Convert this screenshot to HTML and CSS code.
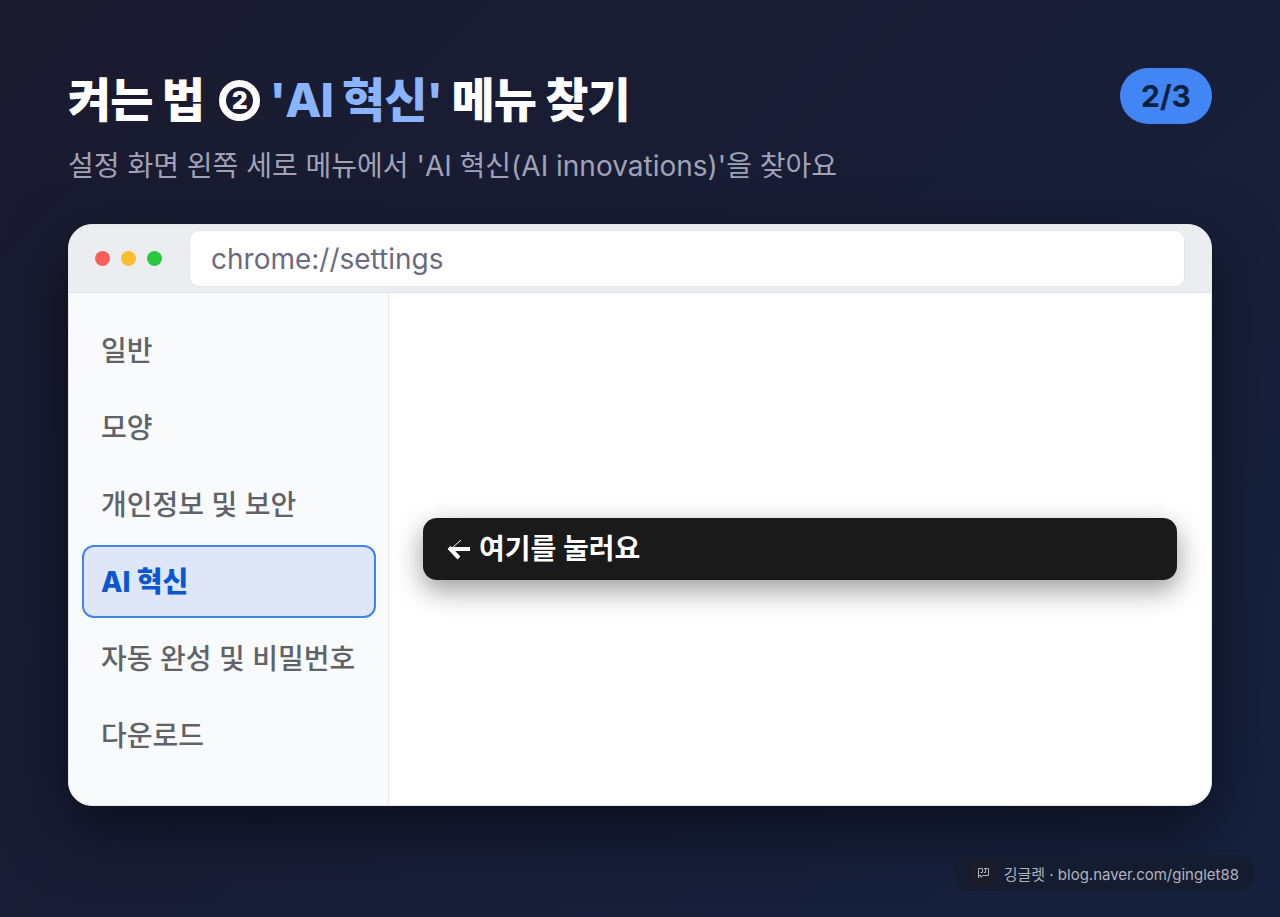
FILE: index.html
```html
<!DOCTYPE html>
<html lang="ko">
<head>
    <meta charset="UTF-8">
    <meta name="viewport" content="width=device-width, initial-scale=1.0">
    <title>켜는 법 ② 'AI 혁신' 메뉴 찾기</title>
    <link rel="stylesheet" href="styles.css">
</head>
<body>
    <div class="slide">
        <header class="header">
            <div>
                <h1>켜는 법 <span class="step">2</span> <span class="highlight">'AI 혁신'</span> 메뉴 찾기</h1>
                <p class="subtitle">설정 화면 왼쪽 세로 메뉴에서 'AI 혁신(AI innovations)'을 찾아요</p>
            </div>
            <span class="page-badge">2/3</span>
        </header>

        <main class="browser">
            <div class="toolbar">
                <div class="dots">
                    <span class="dot red"></span>
                    <span class="dot yellow"></span>
                    <span class="dot green"></span>
                </div>
                <input type="text" class="address" aria-label="주소" value="chrome://settings">
            </div>
            <div class="content">
                <nav class="sidebar">
                    <a href="#">일반</a>
                    <a href="#">모양</a>
                    <a href="#">개인정보 및 보안</a>
                    <a href="#" class="active">AI 혁신</a>
                    <a href="#">자동 완성 및 비밀번호</a>
                    <a href="#">다운로드</a>
                </nav>
                <section class="pane">
                    <div class="callout">
                        <svg width="24" height="24" viewBox="0 0 24 24" fill="none" stroke="#fff" aria-hidden="true">
                            <path stroke-width="4" d="M3 12H23"/>
                            <path stroke-width="4" d="M2 10.500L12 21"/>
                            <path stroke-width="1" d="M5 11L14 3"/>
                        </svg>
                        <span>여기를 눌러요</span>
                    </div>
                </section>
            </div>
        </main>

        <footer class="footer">
            <div class="credit">
                <span class="logo">
                    <svg width="14" height="14" viewBox="0 0 14 14" fill="none" stroke="currentColor" stroke-width="1">
                        <path d="M2.500 12V2.500H6.500V6.500H4.500M8 2.500H12.500V9.500H6.500L5 11.500V9.500H2.500M9.500 2.500V6.500H8"/>
                    </svg>
                </span>
                <span>깅글렛 · blog.naver.com/ginglet88</span>
            </div>
        </footer>
    </div>
</body>
</html>
```

FILE: styles.css
```css
* {
    box-sizing: border-box;
}
body {
    margin: 0;
    font-family: Inter, "Noto Sans CJK KR", sans-serif;
    background: linear-gradient(135deg, #1a1a2e 0%, #16213e 100%);
}
.slide {
    display: flex;
    flex-direction: column;
    min-height: 100vh;
    padding: 68px 68px 0;
}
.header {
    display: flex;
    justify-content: space-between;
    align-items: flex-start;
    margin-bottom: 39px;
}
h1 {
    margin: 0 0 15px;
    color: #fff;
    font-size: 47px;
    font-weight: 800;
    line-height: 64px;
    letter-spacing: -1px;
}
.step {
    display: inline-block;
    width: 41px;
    height: 41px;
    margin: 0 0 0 6px;
    border: 7px solid #fff;
    border-radius: 50%;
    font-size: 24px;
    font-weight: 900;
    letter-spacing: 0;
    line-height: 27px;
    text-align: center;
    vertical-align: 8px;
}
.highlight {
    color: #8ab4ff;
}
.subtitle {
    margin: 0;
    color: #a0a3b8;
    font-size: 28px;
    line-height: 38px;
}
.page-badge {
    padding: 0 21px;
    border-radius: 28px;
    background-color: #4285f4;
    color: #0b1f3f;
    font-size: 30px;
    font-weight: 700;
    line-height: 56px;
}
.browser {
    display: flex;
    flex-direction: column;
    flex-grow: 1;
    overflow: hidden;
    border: 1px solid #e5e7eb;
    border-radius: 24px;
    background-color: #fff;
    box-shadow: 0 24px 64px rgba(0, 0, 0, 0.5);
}
.toolbar {
    display: flex;
    align-items: center;
    gap: 27px;
    height: 68px;
    padding: 0 26px;
    border-bottom: 1px solid #e0e2e6;
    background-color: #ecedf1;
}
.dots {
    display: flex;
    gap: 11px;
}
.dot {
    width: 15px;
    height: 15px;
    border-radius: 50%;
}
.red {
    background-color: #ff5f57;
}
.yellow {
    background-color: #febc2e;
}
.green {
    background-color: #28c840;
}
.address {
    flex-grow: 1;
    min-width: 0;
    height: 57px;
    padding: 0 21px;
    border: 1px solid #e2e4e8;
    border-radius: 10px;
    background-color: #fff;
    color: #6b6b80;
    font-family: inherit;
    font-size: 28px;
}
.content {
    display: flex;
    flex-grow: 1;
}
.sidebar {
    display: flex;
    flex-direction: column;
    flex-shrink: 0;
    gap: 4px;
    width: 320px;
    padding: 21px 12px 21px 13px;
    border-right: 1px solid #e5e7eb;
    background-color: #f8fafc;
}
.sidebar a {
    padding: 2px 17px 0;
    border: 2px solid transparent;
    border-radius: 12px;
    color: #5f6368;
    font-size: 28px;
    font-weight: 500;
    line-height: 67px;
    text-decoration: none;
    white-space: nowrap;
}
.sidebar .active {
    border-color: #4285e8;
    background-color: #dfe6f8;
    color: #0b57d0;
    font-weight: 800;
}
.pane {
    display: flex;
    flex-grow: 1;
    align-items: center;
    padding: 0 34px;
}
.callout {
    display: flex;
    flex-grow: 1;
    align-items: center;
    gap: 8px;
    padding: 0 24px;
    border-radius: 14px;
    background-color: #1a1a1a;
    box-shadow: 0 10px 28px rgba(0, 0, 0, 0.4);
    color: #fff;
    font-size: 28px;
    font-weight: 700;
    line-height: 62px;
}
.footer {
    display: flex;
    justify-content: flex-end;
    height: 111px;
    margin-right: -42px;
    padding-top: 49px;
}
.credit {
    display: flex;
    align-items: center;
    gap: 8px;
    height: 36px;
    padding: 0 15px;
    border-radius: 14px;
    background-color: #151c2f;
    color: #b0b4c0;
    font-size: 15px;
}
.logo {
    display: flex;
    padding: 6px;
    border-radius: 6px;
    background-color: #1a1c28;
}
```
